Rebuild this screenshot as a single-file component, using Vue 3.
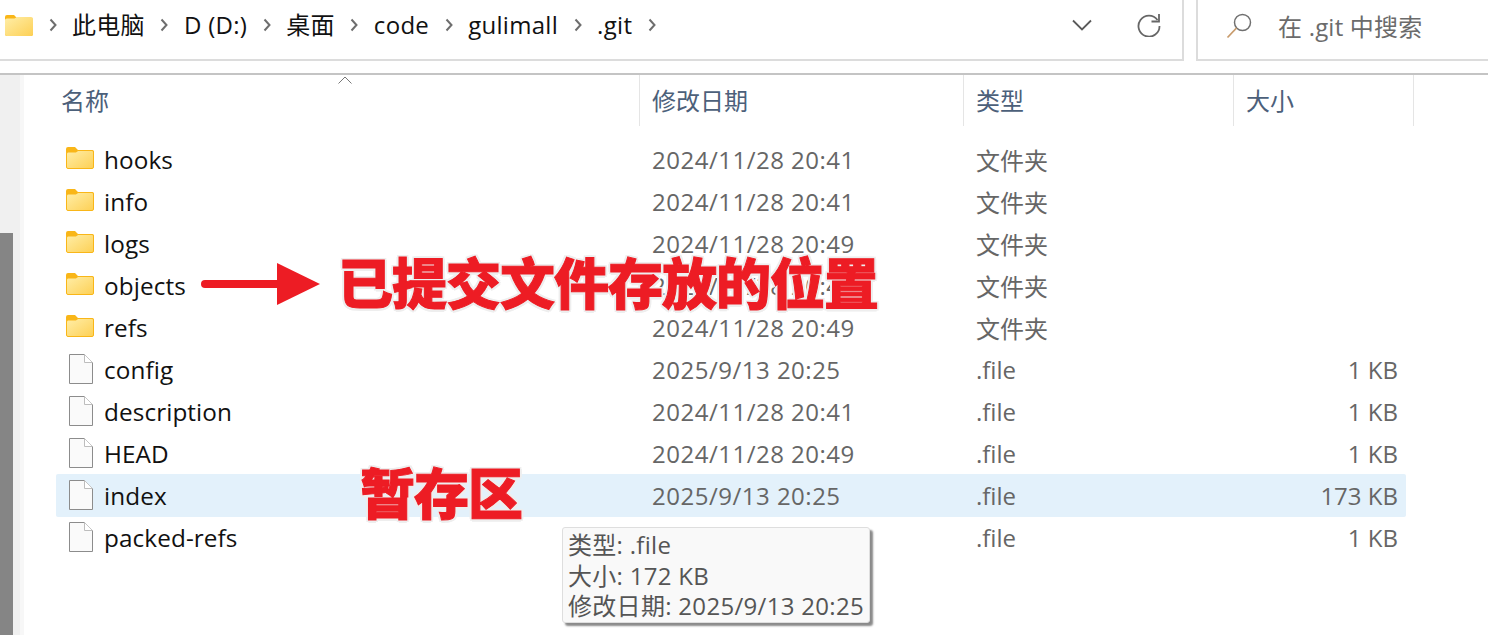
<template>
  <div class="explorer">
    <div class="toolbar">
      <div class="address">
        <svg class="crumb-folder" viewBox="0 0 28 22" width="28" height="22">
          <path d="M0 3a2 2 0 0 1 2-2h7l3 3h14a2 2 0 0 1 2 2v14a2 2 0 0 1-2 2H2a2 2 0 0 1-2-2z" fill="#f9b618" />
          <path d="M0 7a2 2 0 0 1 2-2.500h7.500l2.500-1.500h14a2 2 0 0 1 2 2v15a2 2 0 0 1-2 2H2a2 2 0 0 1-2-2z" fill="url(#folderBig)" />
          <defs>
            <linearGradient id="folderBig" x1="0" y1="0" x2="1" y2="1">
              <stop offset="0" stop-color="#ffeea8" />
              <stop offset="1" stop-color="#fdd055" />
            </linearGradient>
          </defs>
        </svg>
        <template v-for="crumb in crumbs" :key="crumb">
          <svg class="chevron" viewBox="0 0 8 14" width="8" height="14">
            <path d="M1.500 1.500 6.500 7l-5 5.500" fill="none" stroke="#6e6e6e" stroke-width="2" />
          </svg>
          <span class="crumb">{{ crumb }}</span>
        </template>
        <svg class="chevron" viewBox="0 0 8 14" width="8" height="14">
          <path d="M1.500 1.500 6.500 7l-5 5.500" fill="none" stroke="#6e6e6e" stroke-width="2" />
        </svg>
        <svg class="dropdown" viewBox="0 0 20 12" width="20" height="12">
          <path d="M1 1.500 10 10.500 19 1.500" fill="none" stroke="#5a5a5a" stroke-width="1.800" />
        </svg>
        <svg class="refresh" viewBox="0 0 24 24" width="24" height="24">
          <path d="M20.500 7A10.500 10.500 0 1 0 22.500 13" fill="none" stroke="#666" stroke-width="1.800" />
          <path d="M22 1v7.500h-7.500" fill="none" stroke="#666" stroke-width="1.800" />
        </svg>
      </div>
      <div class="search">
        <svg viewBox="0 0 26 26" width="26" height="26">
          <circle cx="16.500" cy="9.500" r="8" fill="none" stroke="#707070" stroke-width="1.500" />
          <path d="M10.500 15 1.500 24.500" stroke="#c89b6c" stroke-width="1.800" />
        </svg>
        <span>在 .git 中搜索</span>
      </div>
    </div>

    <div class="body">
      <div class="sidebar">
        <div class="thumb"></div>
      </div>
      <div class="content">
        <div class="header">
          <svg class="sort" viewBox="0 0 14 8" width="14" height="8">
            <path d="M.5 7.500 7 1l6.500 6.500" fill="none" stroke="#777" />
          </svg>
          <div class="head-cell first">名称</div>
          <div class="head-cell date">修改日期</div>
          <div class="head-cell type">类型</div>
          <div class="head-cell size">大小</div>
        </div>

        <div class="rows">
          <div
            v-for="row in rows"
            :key="row.name"
            class="row"
            :class="{ hovered: row.name === 'index' }">
            <svg v-if="row.folder" class="icon" viewBox="0 0 28 22" width="28" height="22">
              <path d="M0 2a2 2 0 0 1 2-2h7l3 3h14a2 2 0 0 1 2 2v4H0z" fill="#f9b618" />
              <path d="M.5 7q0-2 1.500-2h8l2-1.500h14q1.500 0 1.500 1.500v15q0 1.500-1.500 1.500H2Q.5 21.500.5 20z" fill="url(#folderFill)" stroke="#f9b618" />
              <defs>
                <linearGradient id="folderFill" x1="0" y1="0" x2="1" y2="1">
                  <stop offset="0" stop-color="#ffeea8" />
                  <stop offset="1" stop-color="#fdd055" />
                </linearGradient>
              </defs>
            </svg>
            <svg v-else class="icon file" viewBox="0 0 24 30" width="24" height="30">
              <path d="M.5.500h15l8 8v21H.5z" fill="#fafafa" stroke="#8c8c8c" />
              <path d="M15.500.500v8h8" fill="#fff" stroke="#bdbdbd" />
            </svg>
            <span class="name">{{ row.name }}</span>
            <span class="muted date-text">{{ row.date }}</span>
            <span class="muted">{{ row.type }}</span>
            <span class="muted right">{{ row.size }}</span>
          </div>
        </div>
      </div>
    </div>

    <div class="note note-objects">
      <svg viewBox="0 0 120 44" width="120" height="44">
        <path d="M4 18h72a4 4 0 0 1 0 8H4a4 4 0 0 1 0-8z" fill="#ed1c24" />
        <path d="M76 1 119 22 76 43z" fill="#ed1c24" />
      </svg>
      <span class="note-text">已提交文件存放的位置</span>
    </div>
    <span class="note-text note-index">暂存区</span>

    <div class="tooltip">
      <div>类型: .file</div>
      <div>大小: 172 KB</div>
      <div>修改日期: 2025/9/13 20:25</div>
    </div>
  </div>
</template>

<script setup>
const crumbs = ['此电脑', 'D (D:)', '桌面', 'code', 'gulimall', '.git'];

const rows = [
  { name: 'hooks', date: '2024/11/28 20:41', type: '文件夹', size: '', folder: true },
  { name: 'info', date: '2024/11/28 20:41', type: '文件夹', size: '', folder: true },
  { name: 'logs', date: '2024/11/28 20:49', type: '文件夹', size: '', folder: true },
  { name: 'objects', date: '2024/11/28 20:49', type: '文件夹', size: '', folder: true },
  { name: 'refs', date: '2024/11/28 20:49', type: '文件夹', size: '', folder: true },
  { name: 'config', date: '2025/9/13 20:25', type: '.file', size: '1 KB' },
  { name: 'description', date: '2024/11/28 20:41', type: '.file', size: '1 KB' },
  { name: 'HEAD', date: '2024/11/28 20:49', type: '.file', size: '1 KB' },
  { name: 'index', date: '2025/9/13 20:25', type: '.file', size: '173 KB' },
  { name: 'packed-refs', date: '', type: '.file', size: '1 KB' },
];
</script>

<style>
html, body {
  margin: 0;
  background: #fff;
  overflow: hidden;
}
</style>

<style scoped>
.explorer {
  position: relative;
  width: 1488px;
  height: 635px;
  overflow: hidden;
  background: #fff;
  font-family: "Open Sans", "Noto Sans CJK SC", sans-serif;
  font-size: 24px;
  color: #111;
}
.toolbar {
  display: flex;
  height: 75px;
  box-sizing: border-box;
  border-bottom: 2px solid #c4c4c4;
}
.address {
  display: flex;
  align-items: center;
  gap: 15.500px;
  width: 1184px;
  height: 61px;
  box-sizing: border-box;
  padding: 0 0 10px 5px;
  border-right: 2px solid #dcdcdc;
  border-bottom: 2px solid #dcdcdc;
}
.crumb {
  line-height: 32px;
  letter-spacing: 0.3px;
}
.dropdown {
  margin-left: auto;
}
.refresh {
  margin: 0 21px 0 30px;
}
.search {
  display: flex;
  align-items: center;
  gap: 26px;
  flex: 1;
  height: 61px;
  box-sizing: border-box;
  margin-left: 12px;
  padding: 0 0 8px 28px;
  border-left: 2px solid #dcdcdc;
  border-bottom: 2px solid #dcdcdc;
  color: #6b6b6b;
  letter-spacing: 0.2px;
}
.body {
  display: flex;
  height: 560px;
}
.sidebar {
  display: flex;
  flex-direction: column;
  justify-content: flex-end;
  width: 20px;
  border-right: 4px solid #f7f7f7;
  background: #f0f0f0;
}
.thumb {
  width: 13px;
  height: 402px;
  background: #858585;
}
.content {
  flex: 1;
  position: relative;
}
.header {
  display: flex;
  height: 51px;
  color: #4c607a;
}
.sort {
  position: absolute;
  left: 314px;
  top: 1px;
}
.head-cell {
  box-sizing: border-box;
  padding: 7px 0 0 12px;
  border-right: 1px solid #e5e5e5;
  line-height: 38px;
}
.first {
  width: 616px;
  padding-left: 37px;
}
.date {
  width: 324px;
}
.type {
  width: 270px;
}
.size {
  width: 180px;
}
.rows {
  display: flex;
  flex-direction: column;
  margin: 12px 0 0 32px;
  width: 1350px;
}
.row {
  display: grid;
  grid-template-columns: 48px 548px 324px 200px 1fr;
  align-items: center;
  height: 42px;
  border-radius: 2px;
}
.row.hovered {
  background: #e3f1fb;
  box-shadow: 0 1px 0 #e3f1fb;
}
.icon {
  margin: -2px 0 0 10px;
}
.icon.file {
  margin: 0 0 0 13px;
}
.name {
  font-size: 24.300px;
  letter-spacing: 0.1px;
  white-space: nowrap;
}
.muted {
  color: #666;
  white-space: nowrap;
}
.date-text {
  letter-spacing: 0.5px;
}
.right {
  padding-right: 8px;
  text-align: right;
}
.note {
  position: absolute;
  left: 201px;
  top: 250px;
  display: flex;
  align-items: center;
  gap: 17px;
}
.note .note-text {
  margin-bottom: 8px;
}
.note-text {
  font-family: "Noto Sans CJK SC", sans-serif;
  font-size: 55px;
  font-weight: 900;
  line-height: 60px;
  letter-spacing: -1px;
  color: #ed1c24;
  -webkit-text-stroke: 1px #ed1c24;
  text-shadow: 2.500px 0 0 #eee, -2.500px 0 0 #eee, 0 2.500px 0 #eee, 0 -2.500px 0 #eee,
    2px 2px 0 #eee, -2px 2px 0 #eee, 2px -2px 0 #eee, -2px -2px 0 #eee;
  white-space: nowrap;
}
.note-index {
  position: absolute;
  left: 360px;
  top: 460px;
}
.tooltip {
  position: absolute;
  left: 562px;
  top: 527px;
  width: 308px;
  height: 96px;
  box-sizing: border-box;
  padding: 2px 0 0 5px;
  border: 1px solid #dedede;
  border-radius: 3px;
  background: #f9f9f9;
  box-shadow: 3px 3px 2px #8a8a8a;
  color: #555;
  line-height: 30.500px;
  white-space: nowrap;
  letter-spacing: 0.3px;
}
</style>
